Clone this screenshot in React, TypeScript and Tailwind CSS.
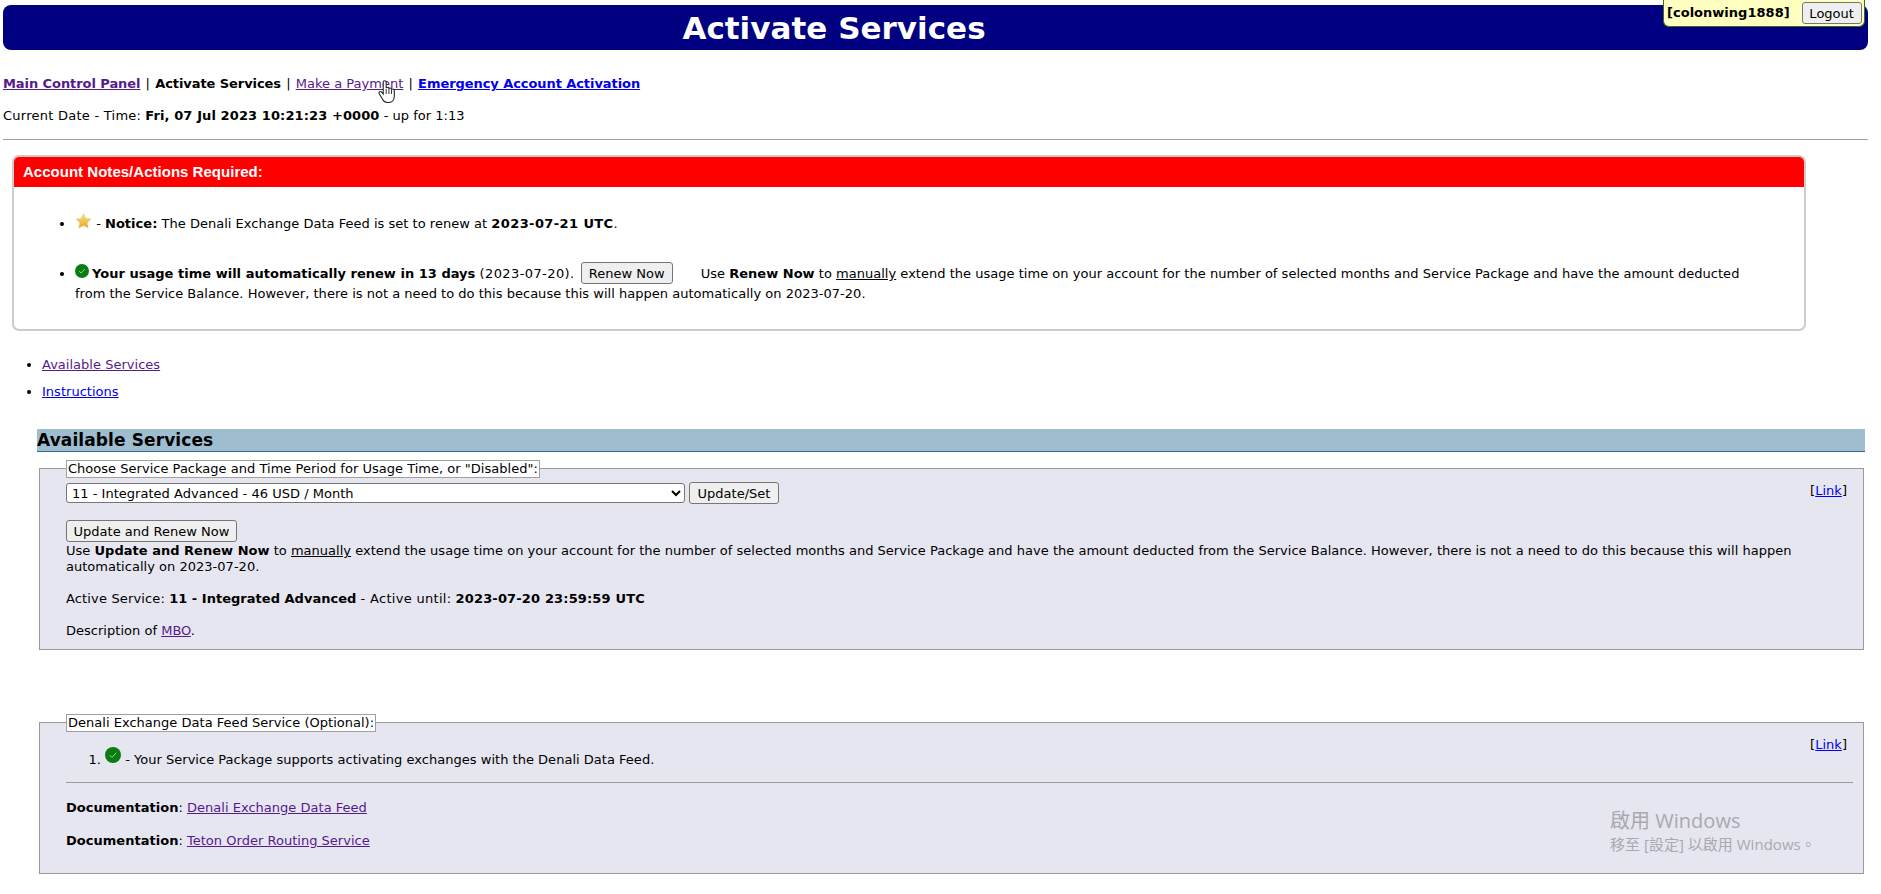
// activate services page - account control panel with notes and service fieldsets

import { ReactNode } from 'react';

const purple = 'text-[#551a8b] underline';
const blue = 'text-[#0000ee] underline';

function NativeButton({ children, className }: { children: ReactNode; className: string }) {
  return (
    <button className={`bg-[#efefef] border border-[#767676] rounded-[3px] text-[13px] leading-none text-black ${className}`}>
      {children}
    </button>
  );
}

function StarIcon() {
  return (
    <svg viewBox="0 0 16 16" className="inline-block w-[17px] h-[16px] align-[-1px]">
      <defs>
        <linearGradient id="star" x1="0" y1="0" x2="0" y2="1">
          <stop offset="0" stopColor="#fbe28a" />
          <stop offset="1" stopColor="#e6a91e" />
        </linearGradient>
      </defs>
      <path d="M8 0.5l2.3 4.9 5.3.7-3.900 3.700 1 5.300L8 12.500l-4.700 2.600 1-5.300L.4 6.100l5.300-.7z" fill="url(#star)" stroke="#e2c46a" strokeWidth="0.5" />
    </svg>
  );
}

function CheckIcon({ className }: { className: string }) {
  return (
    <svg viewBox="0 0 16 16" className={`inline-block ${className}`}>
      <circle cx="8" cy="8" r="8" fill="#0a7d12" />
      <path d="M4.800 8.200l2.200 2.200 4.200-4.600" fill="none" stroke="#9fd3a3" strokeWidth="1" />
    </svg>
  );
}

function HandCursor() {
  return (
    <svg viewBox="0 0 18 24" className="absolute left-[378px] top-[80px] w-[18px] h-[24px]">
      <path
        d="M5.200 2.300c0-2 3-2 3 0v6c0-1.500 2.700-1.500 2.700 0v.7c0-1.400 2.600-1.400 2.600 0v.9c0-1.300 2.800-1.200 2.800.3v5.800c0 3.500-2 6.500-5.300 6.500H9.300c-2.300 0-3.600-1.200-4.600-3L1.200 13.700c-.9-1.700 1.100-3 2.400-1.500l1.600 1.800z"
        fill="#fff"
        stroke="#222"
        strokeWidth="1.100"
      />
      <path d="M8.200 9v5M10.900 9v5M13.500 10v4" stroke="#222" strokeWidth="0.900" />
    </svg>
  );
}

function Fieldset({ legend, height, children }: { legend: string; height: string; children: ReactNode }) {
  return (
    <div className={`relative ml-[39px] w-[1825px] bg-[#e6e6f0] border border-[#9b9b9b] ${height}`}>
      <div className="absolute left-[26px] top-[-9px] h-[18px] bg-white border border-[#a0a0a0] leading-[16px] px-px whitespace-nowrap">
        {legend}
      </div>
      <div className="absolute right-[16px] top-[12px]">
        [<a className={blue}>Link</a>]
      </div>
      {children}
    </div>
  );
}

export default function App() {
  return (
    <div
      className="relative w-[1868px] h-[894px] overflow-hidden bg-white text-black text-[13px] leading-[20px] tracking-[0.02px]"
      style={{ fontFamily: '"DejaVu Sans", Verdana, sans-serif' }}
    >
      {/* title bar */}
      <div className="ml-[3px] mt-[5px] h-[45px] bg-[#000080] rounded-[8px] pr-[203px] text-center text-white font-bold text-[31px] leading-[47px]">
        Activate Services
      </div>
      <div className="absolute left-[1663px] top-0 w-[202px] h-[27px] bg-[#ffffc0] border border-[#3c6a1e] border-t-0 rounded-b-[6px] flex items-center pl-[3px] gap-[12px]">
        <span className="font-bold">[colonwing1888]</span>
        <NativeButton className="w-[60px] h-[22px]">Logout</NativeButton>
      </div>

      {/* nav */}
      <div className="ml-[3px] mt-[24px] h-[20px] whitespace-pre">
        <a className={`font-bold tracking-[-0.07px] ${purple}`}>Main Control Panel</a>
        <span className="mx-px">{' | '}</span>
        <b className="tracking-[-0.07px]">Activate Services</b>
        <span className="mx-px">{' | '}</span>
        <a className={purple}>Make a Payment</a>
        <span className="mx-px">{' | '}</span>
        <a className={`font-bold tracking-[-0.07px] ${blue}`}>Emergency Account Activation</a>
      </div>
      <div className="ml-[3px] mt-[12px] h-[20px]">
        <span className="tracking-[0.25px]">Current Date - Time:</span> <b className="tracking-[0.1px]">Fri, 07 Jul 2023 10:21:23 +0000</b> - up for 1:13
      </div>
      <div className="ml-[3px] mt-[13px] h-px bg-[#a0a0a0]" />

      {/* account notes */}
      <div className="ml-[12px] mt-[15px] w-[1794px] h-[176px] bg-white border-2 border-[#cccccc] rounded-[7px] overflow-hidden">
        <div className="h-[30px] bg-[#ff0000] pl-[9px] text-white font-bold text-[15px] leading-[30px]" style={{ fontFamily: '"Liberation Sans", Arial, sans-serif' }}>
          Account Notes/Actions Required:
        </div>
        <ul className="list-disc pl-[61px] pr-[40px] pt-[26px]">
          <li>
            <StarIcon /> - <b>Notice:</b> The Denali Exchange Data Feed is set to renew at <b className="tracking-[0.4px]">2023-07-21 UTC</b>.
          </li>
          <li className="mt-[29px]">
            <CheckIcon className="w-[14px] h-[14px] align-[0px]" /><b className="ml-[3px]">Your usage time will automatically renew in 13 days</b> <span className="tracking-[0.4px]">(2023-07-20).</span>{' '}
            <NativeButton className="w-[92px] h-[22px] ml-[2px] mr-[28px] -my-px">Renew Now</NativeButton>
            Use <b>Renew Now</b> to <u>manually</u> extend the usage time on your account for the number of selected months and Service Package and have the amount deducted from the Service Balance. However, there is not a need to do this because this will happen automatically on 2023-07-20.
          </li>
        </ul>
      </div>

      {/* anchors */}
      <ul className="list-disc pl-[42px] mt-[24px]">
        <li><a className={purple}>Available Services</a></li>
        <li className="mt-[7px]"><a className={blue}>Instructions</a></li>
      </ul>

      {/* available services */}
      <div className="ml-[37px] mt-[27px] w-[1828px] h-[23px] bg-[#9ebdcf] border-b border-[#336699] font-bold text-[17px] tracking-[0.1px] leading-[23px]">
        Available Services
      </div>
      <div className="h-[16px]" />
      <Fieldset legend={'Choose Service Package and Time Period for Usage Time, or "Disabled":'} height="h-[182px]">
        <div className="pl-[26px] pt-[13px]">
          <div className="flex items-center gap-[4px]">
            <select defaultValue="11" className="w-[619px] h-[20px] bg-white border border-[#767676] rounded-[3px] text-[13px] leading-none pl-[1px]">
              <option value="11">11 - Integrated Advanced - 46 USD / Month</option>
            </select>
            <NativeButton className="w-[90px] h-[22px]">Update/Set</NativeButton>
          </div>
          <NativeButton className="block w-[171px] h-[22px] mt-[16px]">Update and Renew Now</NativeButton>
          <div className="w-[1775px] leading-[16px] mt-[1px]">
            Use <b>Update and Renew Now</b> to <u>manually</u> extend the usage time on your account for the number of selected months and Service Package and have the amount deducted from the Service Balance. However, there is not a need to do this because this will happen automatically on 2023-07-20.
          </div>
          <div className="leading-[16px] mt-[16px]">
            <span className="tracking-[0.15px]">Active Service:</span> <b>11 - Integrated Advanced</b> <span className="tracking-[0.3px]">- Active until:</span> <b className="tracking-[0.15px]">2023-07-20 23:59:59 UTC</b>
          </div>
          <div className="leading-[16px] mt-[16px]">
            Description of <a className={purple}>MBO</a>.
          </div>
        </div>
      </Fieldset>

      <div className="h-[72px]" />
      <Fieldset legend="Denali Exchange Data Feed Service (Optional):" height="h-[152px]">
        <div className="pl-[26px]">
          <ol className="list-decimal pl-[39px] pt-[24px] leading-[20px]">
            <li>
              <CheckIcon className="w-[16px] h-[16px] align-[1px]" /> - Your Service Package supports activating exchanges with the Denali Data Feed.
            </li>
          </ol>
          <div className="mt-[12px] h-px w-[1787px] bg-[#9b9b9b]" />
          <div className="mt-[17px] leading-[16px]">
            <b>Documentation</b>: <a className={purple}>Denali Exchange Data Feed</a>
          </div>
          <div className="mt-[17px] leading-[16px]">
            <b>Documentation</b>: <a className={purple}>Teton Order Routing Service</a>
          </div>
        </div>
      </Fieldset>

      {/* windows activation watermark */}
      <div
        className="absolute left-[1610px] top-[807px] text-[#a9a9af] whitespace-nowrap"
        style={{ fontFamily: '"Open Sans", "Noto Sans CJK TC", sans-serif' }}
      >
        <div className="text-[20px] leading-[28px]">啟用 Windows</div>
        <div className="text-[15px] leading-[18px]">移至 [設定] 以啟用 Windows。</div>
      </div>

      <HandCursor />
    </div>
  );
}
